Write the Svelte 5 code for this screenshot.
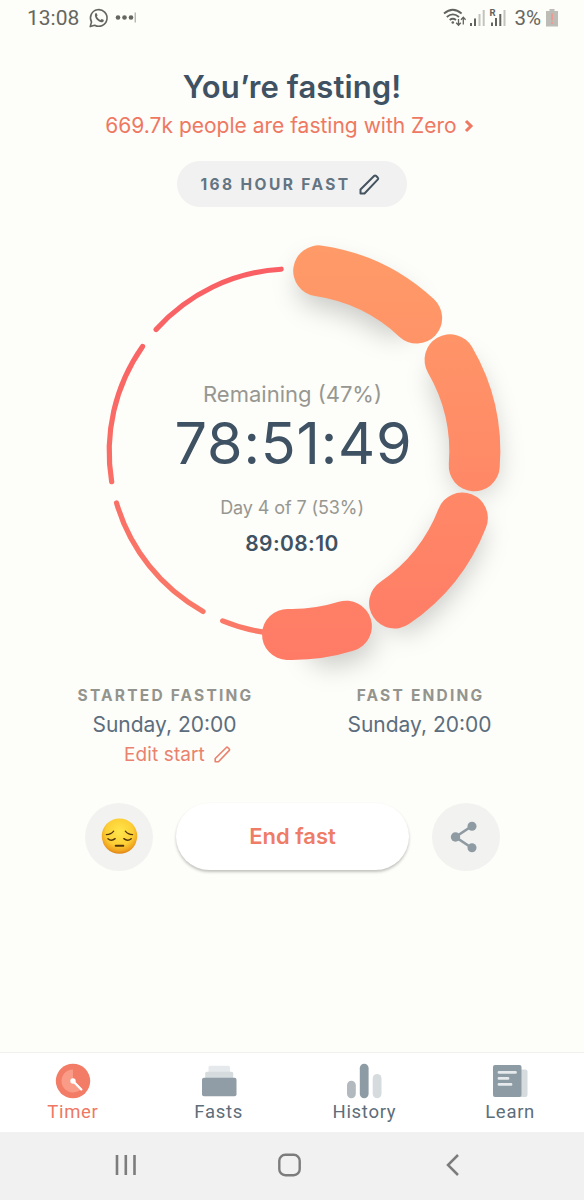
<script lang="ts">
	const cx = 292;
	const cy = 451.7;
	const radius = 182.8;
	const slice = 360 / 7;

	const tabs = ['Timer', 'Fasts', 'History', 'Learn'];
	let active: string = 'Timer';

	function arc(from: number, to: number): string {
		const point = (deg: number) => {
			const a = (deg * Math.PI) / 180;
			return `${cx + radius * Math.sin(a)} ${cy - radius * Math.cos(a)}`;
		};
		return `M${point(from)}A${radius} ${radius} 0 0 1 ${point(to)}`;
	}

	const done = [0, 1, 2].map((i) => arc(i * slice + 8.4, i * slice + 43));
	done.push(arc(3 * slice + 8.4, 181.4));

	const left = [4, 5, 6].map((i) => arc(i * slice + 3.4, (i + 1) * slice - 3.4));
	left.unshift(arc(184, 202.3));

	const shadows = [arc(9, 34), arc(63, 92), arc(113, 142), arc(161, 168)];
</script>

<div class="screen">
	<div class="status">
		<span class="clock">13:08</span>
		<svg width="20" height="20" viewBox="0 0 20 20">
			<path d="M1.2 18.6l1.3-4.6A8.3 8.3 0 1 1 5.7 17.2z" fill="none" stroke="#666660" stroke-width="1.6" stroke-linejoin="round" />
			<path d="M6.2 5.6c.5-.7 1.3-.7 1.6 0l.7 1.6c.2.5-.7 1-.6 1.4.7 1.5 1.9 2.6 3.4 3.3.5.1 1-1 1.5-.9l1.7.8c.6.4.2 1.7-.5 2.1-3.7 1.8-9.6-4.2-7.8-8.3z" fill="#666660" />
		</svg>
		<svg class="more" width="22" height="12" viewBox="0 0 22 12">
			<circle cx="3" cy="5.5" r="2.3" fill="#666660" />
			<circle cx="9.5" cy="5.5" r="2.3" fill="#666660" />
			<circle cx="16" cy="5.5" r="2.3" fill="#666660" />
			<path d="M20.2 0.5v10" stroke="#999994" stroke-width="1" />
		</svg>
		<svg class="signals" width="66" height="22" viewBox="0 0 66 22">
			<g fill="none" stroke="#62625e" stroke-width="1.8">
				<path d="M1 6.5Q9.8-1 18.6 6.5M3.8 10Q9.8 4.8 16 10M6.7 13Q9.8 10.5 13 13" />
				<path d="M15.5 12v6M13.2 15.8l2.3 2.4 2.3-2.4M20.3 17.5v-7M18 12.7l2.3-2.4 2.3 2.4" stroke-width="1.3" />
			</g>
			<circle cx="9.8" cy="15.5" r="1.3" fill="#62625e" />
			<path d="M27 16h2v3h-2zM31 11.5h2v7.5h-2zM48 15.5h2v3.5h-2zM52 11h2v8h-2zM56.300 7h2v12h-2z" fill="#62625e" />
			<path d="M35.5 7h2v12h-2zM39.7 3h2v16h-2zM60.5 3h2v16h-2z" fill="#c4c4be" />
			<text x="46.5" y="8.5" class="roaming">R</text>
		</svg>
		<span class="percent">3%</span>
		<svg width="12" height="18" viewBox="0 0 12 18">
			<path d="M3.5 0h5v2H12v15.5H0V2h3.5z" fill="#bdbcb7" />
			<path d="M6 4.5v7M6 13v2" stroke="#ed9b92" stroke-width="2" />
		</svg>
	</div>

	<header>
		<h1>You’re fasting!</h1>
		<p class="people">
			<span>669.7k people are fasting with Zero</span>
			<svg width="10" height="14" viewBox="0 0 10 14">
				<path d="M2 2l5 5-5 5" fill="none" stroke="#ee7862" stroke-width="3" />
			</svg>
		</p>
		<button class="plan">
			<span>168 HOUR FAST</span>
			<svg width="21" height="21" viewBox="0 0 21 21">
				<path d="M1.5 19.5v-4L15.3 1.8q.8-.7 1.6 0l2 2q.7.8 0 1.6L5.500 19.500z" fill="none" stroke="#43535f" stroke-width="2" stroke-linejoin="round" />
			</svg>
		</button>
	</header>

	<section class="dial">
		<svg width="584" height="460" viewBox="0 222 584 460">
			<defs>
				<linearGradient id="done" gradientUnits="userSpaceOnUse" x1="292" y1="245" x2="292" y2="660">
					<stop offset="0" stop-color="#ff9b68" />
					<stop offset="1" stop-color="#ff7b66" />
				</linearGradient>
				<linearGradient id="left" gradientUnits="userSpaceOnUse" x1="292" y1="265" x2="292" y2="636">
					<stop offset="0" stop-color="#f95f64" />
					<stop offset="1" stop-color="#fa7a68" />
				</linearGradient>
				<filter id="blur" filterUnits="userSpaceOnUse" x="200" y="200" width="384" height="540">
					<feGaussianBlur stdDeviation="13" />
				</filter>
			</defs>
			<g fill="none" stroke-linecap="round">
				<g filter="url(#blur)" stroke="#000" stroke-opacity="0.2" stroke-width="46" transform="translate(0 13)">
					{#each shadows as d}
						<path {d} />
					{/each}
				</g>
				<g stroke="url(#left)" stroke-width="5.2">
					{#each left as d}
						<path {d} />
					{/each}
				</g>
				<g stroke="url(#done)" stroke-width="51">
					{#each done as d}
						<path {d} />
					{/each}
				</g>
			</g>
		</svg>
		<div class="readout">
			<p class="remaining">Remaining (47%)</p>
			<p class="timer">78:51:49</p>
			<p class="day">Day 4 of 7 (53%)</p>
			<p class="elapsed">89:08:10</p>
		</div>
	</section>

	<section class="times">
		<div class="time">
			<h2>STARTED FASTING</h2>
			<p>Sunday, 20:00</p>
			<a class="edit" href="#edit">
				<span>Edit start</span>
				<svg width="17" height="17" viewBox="0 0 21 21">
					<path d="M1.5 19.5v-4L15.3 1.8q.8-.7 1.6 0l2 2q.7.8 0 1.6L5.500 19.500z" fill="none" stroke="#e9826f" stroke-width="2" stroke-linejoin="round" />
				</svg>
			</a>
		</div>
		<div class="time">
			<h2>FAST ENDING</h2>
			<p>Sunday, 20:00</p>
		</div>
	</section>

	<section class="actions">
		<button class="round" aria-label="Mood">
			<svg width="37" height="37" viewBox="0 0 38 38">
				<defs>
					<radialGradient id="face" cx="0.5" cy="0.38" r="0.64">
						<stop offset="0" stop-color="#ffe64b" />
						<stop offset="0.6" stop-color="#fccf35" />
						<stop offset="0.85" stop-color="#f0a31f" />
						<stop offset="1" stop-color="#d97912" />
					</radialGradient>
				</defs>
				<circle cx="19" cy="18.6" r="18.2" fill="url(#face)" />
				<g fill="none" stroke="#54340f" stroke-width="1.3" stroke-linecap="round">
					<path d="M5.5 17Q10.5 17 13 13.5M25 13.5Q27.5 17 32.5 17" />
					<path d="M7.2 21.3Q10.5 24.3 14.500 21.300M23.500 21.300Q27.500 24.300 31 21.300" stroke-width="1.6" />
					<path d="M15 28.5h8" stroke-width="1.8" />
				</g>
			</svg>
		</button>
		<button class="end">End fast</button>
		<button class="round" aria-label="Share">
			<svg class="share" width="28" height="32" viewBox="0 0 28 32">
				<path d="M22 5L5.5 16 22 27" fill="none" stroke="#8f9ba3" stroke-width="2.7" />
				<g fill="#8f9ba3">
					<circle cx="22" cy="5.2" r="4.5" />
					<circle cx="5.5" cy="16" r="4.7" />
					<circle cx="22" cy="26.8" r="4.5" />
				</g>
			</svg>
		</button>
	</section>

	<nav class="tabs">
		{#each tabs as tab}
			<button class="tab" class:active={tab === active} on:click={() => (active = tab)}>
				<svg width="36" height="36" viewBox="0 0 36 36">
					{#if tab === 'Timer'}
						<circle cx="18" cy="18" r="17.2" fill="#f27c65" />
						<path d="M18 6.5A11.5 11.5 0 1 0 26 26.2L18 18z" fill="#f99b87" />
						<path d="M18 18l8.3 8.5" stroke="#fff" stroke-width="2.4" stroke-linecap="round" />
						<circle cx="18" cy="18" r="2.7" fill="#fff" />
					{:else if tab === 'Fasts'}
						<rect x="7.5" y="2.8" width="21.5" height="8" rx="1.5" fill="#e6e9eb" />
						<rect x="4.2" y="8.8" width="28" height="8" rx="1.5" fill="#d6dbde" />
						<rect x="1" y="14.8" width="34.5" height="18.5" rx="2" fill="#909da6" />
					{:else if tab === 'History'}
						<rect x="1" y="17.8" width="8.8" height="17.4" rx="4.4" fill="#b2babf" />
						<rect x="13.8" y="0.8" width="8.8" height="34.4" rx="4.4" fill="#8d9ba4" />
						<rect x="26.7" y="11" width="8.8" height="24.2" rx="4.4" fill="#d6dbde" />
					{:else}
						<rect x="24" y="6.5" width="11.5" height="27.5" rx="2" fill="#d6dbde" />
						<rect x="1" y="2" width="28.5" height="32" rx="2" fill="#8d9ba4" />
						<path d="M7 9.4h16.5M7 15.4h9M7 21.4h12" stroke="#e7eaec" stroke-width="2.8" stroke-linecap="round" />
					{/if}
				</svg>
				<span>{tab}</span>
			</button>
		{/each}
	</nav>

	<footer>
		<svg width="24" height="24" viewBox="0 0 24 24">
			<path d="M3 2v20M11.8 2v20M20.5 2v20" stroke="#7c7c7c" stroke-width="2.6" />
		</svg>
		<svg width="24" height="24" viewBox="0 0 24 24">
			<rect x="1.3" y="1.8" width="20.4" height="20.4" rx="6" fill="none" stroke="#7c7c7c" stroke-width="2.4" />
		</svg>
		<svg width="24" height="24" viewBox="0 0 24 24">
			<path d="M17 2L7 12l10 10" fill="none" stroke="#7c7c7c" stroke-width="2.5" />
		</svg>
	</footer>
</div>

<style>
	:global(body) {
		background: #fdfdf9;
	}

	.screen {
		display: flex;
		flex-direction: column;
		width: 584px;
		height: 1200px;
		overflow: hidden;
		background: #fdfdf9;
		font-family: Inter, Roboto, sans-serif;
		color: #3f5263;
	}

	p,
	h1,
	h2 {
		margin: 0;
		white-space: nowrap;
	}

	button {
		padding: 0;
		border: none;
		background: none;
		font-family: inherit;
		cursor: pointer;
	}

	svg {
		display: block;
		flex: none;
		overflow: visible;
	}

	.status {
		display: flex;
		align-items: center;
		height: 35px;
		padding: 1px 26px 0 27px;
		font-family: Roboto, sans-serif;
		font-size: 21px;
		color: #666660;
	}

	.clock {
		width: 62px;
	}

	.more {
		margin-left: 6px;
	}

	.signals {
		margin-left: auto;
	}

	.roaming {
		font: bold 9.5px Roboto, sans-serif;
		fill: #62625e;
	}

	.percent {
		margin: 0 5px;
		font-size: 20.5px;
	}

	header {
		display: flex;
		flex-direction: column;
		align-items: center;
		height: 186px;
	}

	h1 {
		margin-top: 31px;
		font-size: 31px;
		font-weight: 600;
		letter-spacing: 0.1px;
		line-height: 40px;
	}

	.people {
		display: flex;
		align-items: center;
		gap: 7px;
		margin: 4px 5px 0 0;
		line-height: 30px;
		font-size: 21px;
		color: #ee7862;
	}

	.plan {
		display: flex;
		align-items: center;
		justify-content: center;
		gap: 9px;
		width: 230px;
		height: 46px;
		margin-top: 20px;
		padding: 1px 3px 0 0;
		box-sizing: border-box;
		border-radius: 23px;
		background: #f2f1f1;
		font-size: 15.5px;
		font-weight: 700;
		letter-spacing: 2.4px;
		color: #637482;
	}

	.dial {
		position: relative;
		height: 460px;
	}

	.readout {
		position: absolute;
		inset: 156px 0 auto;
		text-align: center;
	}

	.remaining {
		padding-left: 1px;
		line-height: 32px;
		font-size: 22px;
		color: #979791;
	}

	.timer {
		padding-left: 3px;
		line-height: 66px;
		font-size: 57.5px;
		letter-spacing: 0.8px;
	}

	.day {
		margin-top: 17px;
		line-height: 30px;
		font-size: 18px;
		letter-spacing: -0.1px;
		color: #979791;
	}

	.elapsed {
		margin-top: 6px;
		line-height: 30px;
		font-size: 21px;
		font-weight: 600;
		letter-spacing: 0.4px;
	}

	.times {
		display: grid;
		grid-template-columns: 255px 255px;
		justify-content: center;
		height: 118px;
		padding-top: 1px;
		box-sizing: border-box;
		text-align: center;
	}

	.time {
		position: relative;
	}

	h2 {
		padding-left: 2px;
		line-height: 26px;
		font-size: 15.5px;
		font-weight: 700;
		letter-spacing: 2.2px;
		color: #94948e;
	}

	.time p {
		margin-top: 2px;
		line-height: 28px;
		font-size: 21px;
		color: #5c6d7d;
	}

	.edit {
		display: flex;
		align-items: center;
		justify-content: center;
		gap: 9px;
		margin-left: 26px;
		line-height: 31px;
		font-size: 19px;
		letter-spacing: 0.1px;
		color: #e9826f;
		text-decoration: none;
	}

	.actions {
		display: flex;
		justify-content: center;
		gap: 23px;
		height: 253px;
		padding: 3px 0 0 1px;
		box-sizing: border-box;
	}

	.round {
		display: flex;
		align-items: center;
		justify-content: center;
		width: 68px;
		height: 68px;
		border-radius: 50%;
		background: #f2f2f1;
	}

	.share {
		margin-right: 4px;
	}

	.end {
		width: 233px;
		height: 67px;
		border-radius: 34px;
		background: #fff;
		box-shadow: 0 2px 3px rgba(0, 0, 0, 0.24);
		font-size: 22px;
		font-weight: 600;
		color: #ee7c66;
	}

	.tabs {
		display: grid;
		grid-template-columns: repeat(4, 1fr);
		height: 80px;
		padding-right: 1px;
		box-sizing: border-box;
		border-top: 1px solid #f1f1ee;
		background: #fff;
	}

	.tab {
		display: flex;
		flex-direction: column;
		align-items: center;
		padding-top: 10px;
		font-family: Roboto, sans-serif;
		font-size: 18.5px;
		letter-spacing: 0.7px;
		line-height: 26px;
		color: #5d6d79;
	}

	.active {
		color: #ee7862;
	}

	footer {
		display: flex;
		justify-content: space-between;
		align-items: center;
		height: 68px;
		padding: 0 119px 2px 114px;
		box-sizing: border-box;
		background: #f1f1f1;
	}
</style>
